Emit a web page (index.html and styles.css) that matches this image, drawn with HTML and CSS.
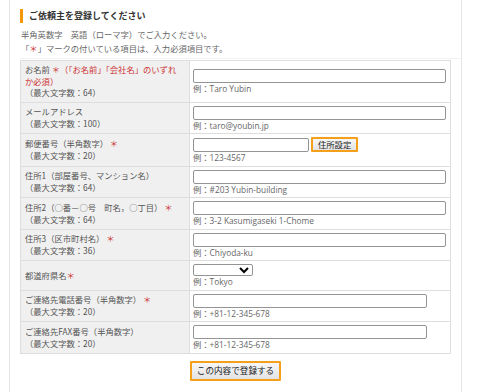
FILE: index.html
```html
<!DOCTYPE html>
<html lang="ja">
<head>
    <meta charset="utf-8">
    <link rel="stylesheet" href="styles.css">
</head>
<body>
    <div class="page">
        <div class="intro">
            <h2 class="title">ご依頼主を登録してください</h2>
            <p class="lead">半角英数字　英語（ローマ字）でご入力ください。<br>「<span class="req">＊</span>」マークの付いている項目は、入力必須項目です。</p>
        </div>

        <form class="entry-form">
            <table class="entry-table">
                <tr>
                    <th>お名前 <span class="req">＊（「お名前」「会社名」のいずれか必須）</span><br>（最大文字数：64）</th>
                    <td>
                        <input type="text" class="field">
                        <div class="hint">例：Taro Yubin</div>
                    </td>
                </tr>
                <tr>
                    <th>メールアドレス<br>（最大文字数：100）</th>
                    <td>
                        <input type="text" class="field">
                        <div class="hint">例：taro@youbin.jp</div>
                    </td>
                </tr>
                <tr>
                    <th>郵便番号（半角数字） <span class="req">＊</span><br>（最大文字数：20）</th>
                    <td>
                        <div class="zip-row">
                            <input type="text" class="field zip">
                            <button type="button" class="btn">住所設定</button>
                        </div>
                        <div class="hint">例：123-4567</div>
                    </td>
                </tr>
                <tr>
                    <th>住所1（部屋番号、マンション名）<br>（最大文字数：64）</th>
                    <td>
                        <input type="text" class="field">
                        <div class="hint">例：#203 Yubin-building</div>
                    </td>
                </tr>
                <tr>
                    <th>住所2（○番－○号　町名，○丁目） <span class="req">＊</span><br>（最大文字数：64）</th>
                    <td>
                        <input type="text" class="field">
                        <div class="hint">例：3-2 Kasumigaseki 1-Chome</div>
                    </td>
                </tr>
                <tr>
                    <th>住所3（区市町村名） <span class="req">＊</span><br>（最大文字数：36）</th>
                    <td>
                        <input type="text" class="field">
                        <div class="hint">例：Chiyoda-ku</div>
                    </td>
                </tr>
                <tr>
                    <th>都道府県名<span class="req">＊</span></th>
                    <td>
                        <select class="pref"><option></option></select>
                        <div class="hint">例：Tokyo</div>
                    </td>
                </tr>
                <tr>
                    <th>ご連絡先電話番号（半角数字） <span class="req">＊</span><br>（最大文字数：20）</th>
                    <td>
                        <input type="text" class="field short">
                        <div class="hint">例：+81-12-345-678</div>
                    </td>
                </tr>
                <tr>
                    <th>ご連絡先FAX番号（半角数字）<br>（最大文字数：20）</th>
                    <td>
                        <input type="text" class="field short">
                        <div class="hint">例：+81-12-345-678</div>
                    </td>
                </tr>
            </table>

            <div class="actions">
                <button type="submit" class="btn submit">この内容で登録する</button>
            </div>
        </form>
    </div>
</body>
</html>
```

FILE: styles.css
```css
body {
    margin: 0;
    background-color: #fff;
    font-family: "Open Sans", "Noto Sans CJK JP", sans-serif;
    font-size: 8.3px;
    color: #555;
}

.page {
    margin-left: 9px;
    width: 431px;
    padding: 0 10px;
    min-height: 392px;
    border-left: 1px solid #e6e6e6;
    border-right: 1px solid #e6e6e6;
}

.intro {
    padding-top: 9px;
    height: 49px;
    border-bottom: 1px solid #f2f2f2;
    margin-right: -10px;
}

.title {
    margin: 0;
    padding-left: 6px;
    border-left: 3px solid #f39800;
    font-family: "Noto Sans CJK JP", sans-serif;
    font-size: 9px;
    font-weight: bold;
    line-height: 14px;
    color: #333;
}

.lead {
    margin: 5px 0 0 1px;
    font-family: "Noto Sans CJK JP", sans-serif;
    line-height: 13.5px;
    color: #666;
}

.req {
    color: #cc3333;
}

.entry-form {
    margin: 0;
}

.entry-table {
    width: 431px;
    table-layout: fixed;
    border-collapse: collapse;
    margin-top: 1px;
}

.entry-table th,
.entry-table td {
    border: 1px solid #dedede;
    padding: 3px 4px 2.5px;
    vertical-align: middle;
    text-align: left;
    line-height: 11px;
}

.entry-table th {
    width: 154px;
    padding-right: 10px;
    background-color: #f0f0f0;
    font-family: "Noto Sans CJK JP", sans-serif;
    font-weight: normal;
    line-height: 11.7px;
    color: #555;
}

.entry-table td {
    background-color: #fff;
    padding-left: 3px;
}

.field {
    display: block;
    box-sizing: border-box;
    width: 253px;
    height: 14px;
    margin: 0;
    padding: 0 2px;
    border: 1px solid #949494;
    border-radius: 2px;
    background: #fff;
    font-size: 8px;
}

.field.short {
    width: 234px;
}

.zip-row {
    display: flex;
    align-items: center;
    gap: 2px;
}

.field.zip {
    width: 116px;
}

.btn {
    box-sizing: border-box;
    margin: 0;
    padding: 0 5px;
    height: 15px;
    border: 2px solid #f5a01a;
    border-radius: 1px;
    background: linear-gradient(#f7f7f7, #e3e3e3);
    font-family: "Noto Sans CJK JP", sans-serif;
    font-size: 8.3px;
    line-height: 11px;
    color: #222;
}

.pref {
    display: block;
    box-sizing: border-box;
    width: 60px;
    height: 12px;
    margin: 0;
    padding: 0;
    border: 1px solid #949494;
    border-radius: 2px;
    background: #fff;
    font-size: 7px;
}

.hint {
    margin-top: 0;
    font-family: "Open Sans", "Noto Sans CJK JP", sans-serif;
    color: #666;
}

.actions {
    padding-top: 7px;
    text-align: center;
}

.btn.submit {
    height: 20px;
    padding: 0 5px;
    font-size: 8.6px;
}
```
